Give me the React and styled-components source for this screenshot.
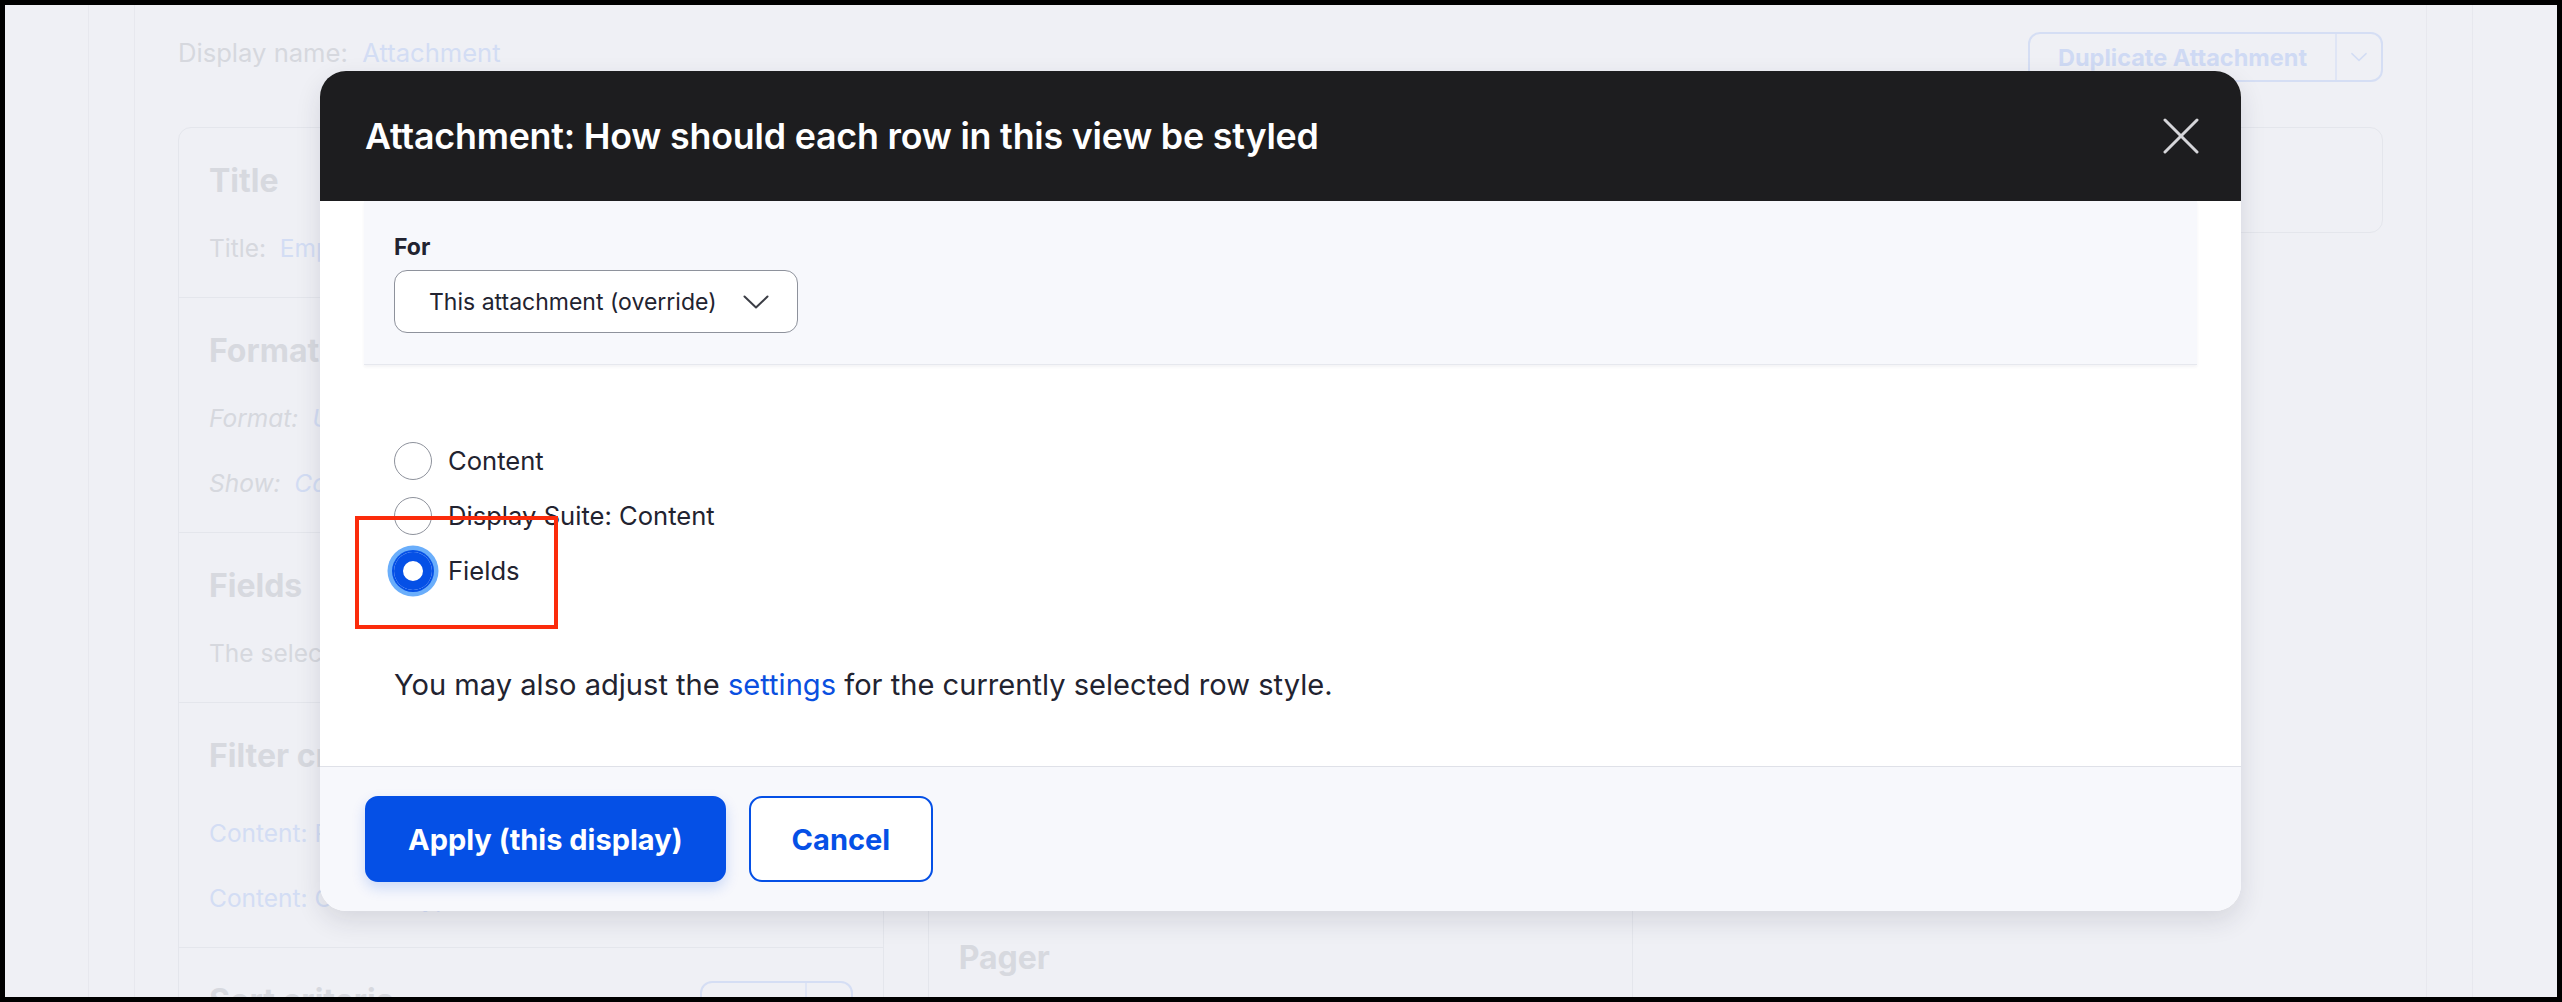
import React from 'react';
import styled, { createGlobalStyle } from 'styled-components';

const GlobalStyle = createGlobalStyle`
  html, body { margin: 0; padding: 0; }
  body { background: #000; font-family: Inter, "Noto Sans", "Liberation Sans", sans-serif; }
  *, *::before, *::after { box-sizing: border-box; }
`;

const Frame = styled.div`
  width: 2562px;
  height: 1002px;
  padding: 5px;
  background: #000;
`;

const Viewport = styled.div`
  position: relative;
  height: 100%;
  background: #eff0f5;
  overflow: hidden;
`;

const Shell = styled.div`
  margin-left: 83px;
  width: 2385px;
  height: 100%;
  border-left: 1px solid #e7e8ee;
  border-right: 1px solid #e7e8ee;
`;

const Inner = styled.div`
  margin: 0 45px;
  height: 100%;
  border-left: 1px solid #e7e8ee;
  border-right: 1px solid #e7e8ee;
  padding: 0 43px;
`;

const TopBar = styled.div`
  display: flex;
  justify-content: space-between;
  align-items: center;
  padding-top: 27px;
`;

const DisplayName = styled.div`
  font-size: 25.6px;
  color: #d6d8de;
  padding-bottom: 10px;
`;

const FadedLink = styled.span`
  color: #d3ddf4;
`;

const SplitButton = styled.div`
  display: flex;
  align-items: stretch;
  height: 50px;
  border: 2px solid #d5def4;
  border-radius: 12px;
  color: #cfdaf4;
  font-size: 23.5px;
  font-weight: 700;
`;

const SplitMain = styled.div`
  display: flex;
  align-items: center;
  padding: 0 ${p => p.$pad}px;
`;

const SplitToggle = styled.div`
  display: flex;
  align-items: center;
  justify-content: center;
  width: 46px;
  border-left: 2px solid #dfe5f5;
`;

const Columns = styled.div`
  display: grid;
  grid-template-columns: repeat(3, 1fr);
  gap: 44px;
  margin-top: 45px;
  align-items: start;
`;

const Card = styled.div`
  border: 1px solid #e4e6ec;
  border-radius: 13px;
`;

const Section = styled.div`
  padding: 33px 30px ${p => p.$pb || 31}px;
  & + & {
    border-top: 1px solid #e4e6ec;
  }
`;

const HeadRow = styled.div`
  display: flex;
  justify-content: space-between;
  align-items: flex-start;
`;

const Heading = styled.h3`
  margin: 0;
  font-size: 32px;
  line-height: 40px;
  font-weight: 700;
  color: #d7d9df;
`;

const Lines = styled.div`
  display: flex;
  flex-direction: column;
  gap: 29px;
  margin-top: 29px;
`;

const Line = styled.div`
  font-size: 24.5px;
  line-height: 36px;
  color: #d6d8de;
  font-style: ${p => (p.$italic ? 'italic' : 'normal')};
  white-space: nowrap;
`;

/* Dialog */

const Dialog = styled.div`
  position: absolute;
  left: 315px;
  top: 66px;
  width: 1921px;
  background: #fff;
  border-radius: 26px;
  overflow: hidden;
  box-shadow: 0 10px 26px rgba(30, 36, 60, 0.12);
`;

const DialogHeader = styled.div`
  height: 130px;
  background: #1d1d1f;
  display: flex;
  align-items: center;
  justify-content: space-between;
  padding: 0 42px 0 45px;
`;

const DialogTitle = styled.h2`
  margin: 0;
  font-size: 35.8px;
  font-weight: 600;
  color: #fff;
  letter-spacing: -0.2px;
`;

const CloseButton = styled.button`
  border: 0;
  padding: 0;
  background: none;
  width: 36px;
  height: 36px;
  display: flex;
  cursor: pointer;
`;

const DialogBody = styled.div`
  padding: 0 44px;
`;

const OverrideBand = styled.div`
  background: #f7f8fc;
  padding: 31px 30px 31px;
  border-bottom: 1px solid #e6e8ee;
  box-shadow: 0 2px 3px rgba(20, 25, 50, 0.05);
`;

const FieldLabel = styled.label`
  display: block;
  font-size: 23px;
  line-height: 30px;
  font-weight: 700;
  color: #222330;
  margin-bottom: 8px;
`;

const Select = styled.div`
  display: inline-flex;
  align-items: center;
  gap: 26px;
  height: 63px;
  padding: 0 28px 0 34px;
  border: 1px solid #8e929c;
  border-radius: 13px;
  background: #fff;
  font-size: 23px;
  color: #222330;
`;

const Form = styled.div`
  padding: 77px 30px 62px;
`;

const RadioList = styled.div`
  display: flex;
  flex-direction: column;
  gap: 17px;
`;

const RadioRow = styled.label`
  display: flex;
  align-items: center;
  gap: 16px;
  font-size: 25.6px;
  line-height: 38px;
  color: #222330;
`;

const RadioCircle = styled.span`
  flex: none;
  width: 38px;
  height: 38px;
  border-radius: 50%;
  background: #fff;
  border: ${p => (p.$checked ? '0' : '1.5px solid #8e929c')};
  box-shadow: ${p =>
    p.$checked
      ? 'inset 0 0 0 9px #0550e6, 0 0 0 2px #0550e6, 0 0 0 6.5px #6aaefb'
      : 'none'};
`;

const HelpText = styled.p`
  margin: 76px 0 0;
  font-size: 29.1px;
  line-height: 38px;
  color: #222330;
`;

const InlineLink = styled.a`
  color: #0a4fe0;
  text-decoration: none;
`;

const DialogFooter = styled.div`
  display: flex;
  gap: 23px;
  padding: 29px 45px;
  background: #f7f8fc;
  border-top: 1px solid #dfe1e8;
`;

const Button = styled.button`
  height: 86px;
  padding: 0 41px;
  border-radius: 13px;
  border: 2px solid #0550e6;
  font-family: inherit;
  font-size: 29px;
  font-weight: 700;
  cursor: pointer;
  background: ${p => (p.$primary ? '#0550e6' : '#fff')};
  color: ${p => (p.$primary ? '#fff' : '#0550e6')};
  box-shadow: ${p => (p.$primary ? '0 6px 14px rgba(5, 80, 230, 0.18)' : 'none')};
`;

const Annotation = styled.div`
  position: absolute;
  left: 35px;
  top: 445px;
  width: 203px;
  height: 113px;
  border: 4px solid #fb2b0b;
  pointer-events: none;
`;

const Chevron = ({ color = '#3b3d45', w = 26, h = 14, sw = 2 }) => (
  <svg width={w} height={h} viewBox="0 0 26 14" fill="none">
    <polyline points="1.5,1.5 13,12.5 24.5,1.5" stroke={color} strokeWidth={sw} strokeLinecap="round" strokeLinejoin="round" />
  </svg>
);

const CloseIcon = () => (
  <svg width="36" height="36" viewBox="0 0 36 36" fill="none">
    <line x1="2" y1="2" x2="34" y2="34" stroke="#d6d6da" strokeWidth="3" strokeLinecap="round" />
    <line x1="34" y1="2" x2="2" y2="34" stroke="#d6d6da" strokeWidth="3" strokeLinecap="round" />
  </svg>
);

const radios = [
  { label: 'Content', checked: false },
  { label: 'Display Suite: Content', checked: false },
  { label: 'Fields', checked: true },
];

export default function App() {
  return (
    <>
      <GlobalStyle />
      <Frame>
        <Viewport>
          <Shell>
            <Inner>
              <TopBar>
                <DisplayName>
                  Display name:&nbsp; <FadedLink>Attachment</FadedLink>
                </DisplayName>
                <SplitButton>
                  <SplitMain $pad={28}>Duplicate Attachment</SplitMain>
                  <SplitToggle>
                    <Chevron color="#d3ddf4" w={16} h={10} sw={2.4} />
                  </SplitToggle>
                </SplitButton>
              </TopBar>

              <Columns>
                <Card>
                  <Section>
                    <Heading>Title</Heading>
                    <Lines>
                      <Line>Title:&nbsp; <FadedLink>Empty</FadedLink></Line>
                    </Lines>
                  </Section>
                  <Section>
                    <Heading>Format</Heading>
                    <Lines>
                      <Line $italic>Format:&nbsp; <FadedLink>Unformatted list</FadedLink> | <FadedLink>Settings</FadedLink></Line>
                      <Line $italic>Show:&nbsp; <FadedLink>Content</FadedLink> | <FadedLink>Settings</FadedLink></Line>
                    </Lines>
                  </Section>
                  <Section>
                    <Heading>Fields</Heading>
                    <Lines>
                      <Line>The selected style or row format does not use fields.</Line>
                    </Lines>
                  </Section>
                  <Section>
                    <HeadRow>
                      <Heading>Filter criteria</Heading>
                      <SplitButton>
                        <SplitMain $pad={28}>Add</SplitMain>
                        <SplitToggle>
                          <Chevron color="#d3ddf4" w={16} h={10} sw={2.4} />
                        </SplitToggle>
                      </SplitButton>
                    </HeadRow>
                    <Lines>
                      <Line><FadedLink>Content: Published (= Yes)</FadedLink></Line>
                      <Line><FadedLink>Content: Content type (= Article)</FadedLink></Line>
                    </Lines>
                  </Section>
                  <Section>
                    <HeadRow>
                      <Heading>Sort criteria</Heading>
                      <SplitButton>
                        <SplitMain $pad={28}>Add</SplitMain>
                        <SplitToggle>
                          <Chevron color="#d3ddf4" w={16} h={10} sw={2.4} />
                        </SplitToggle>
                      </SplitButton>
                    </HeadRow>
                  </Section>
                </Card>

                <Card>
                  <Section>
                    <Heading>Attachment settings</Heading>
                    <Lines>
                      <Line>Attach to: <FadedLink>Not defined</FadedLink></Line>
                      <Line>Attachment position: <FadedLink>Before</FadedLink></Line>
                      <Line>Inherit contextual filters: <FadedLink>Yes</FadedLink></Line>
                      <Line>Inherit exposed filters: <FadedLink>No</FadedLink></Line>
                      <Line>Inherit pager: <FadedLink>No</FadedLink></Line>
                      <Line>Render pager: <FadedLink>No</FadedLink></Line>
                    </Lines>
                  </Section>
                  <Section>
                    <Heading>Header</Heading>
                    <Lines>
                      <Line>No header</Line>
                    </Lines>
                  </Section>
                  <Section $pb={38}>
                    <Heading>Footer</Heading>
                  </Section>
                  <Section>
                    <Heading>Pager</Heading>
                    <Lines>
                      <Line>Items to display: <FadedLink>10 items</FadedLink></Line>
                    </Lines>
                  </Section>
                </Card>

                <Card>
                  <Section>
                    <Heading>Advanced</Heading>
                  </Section>
                </Card>
              </Columns>
            </Inner>
          </Shell>

          <Dialog role="dialog">
            <DialogHeader>
              <DialogTitle>Attachment: How should each row in this view be styled</DialogTitle>
              <CloseButton aria-label="Close">
                <CloseIcon />
              </CloseButton>
            </DialogHeader>
            <DialogBody>
              <OverrideBand>
                <FieldLabel>For</FieldLabel>
                <Select>
                  This attachment (override)
                  <Chevron />
                </Select>
              </OverrideBand>
              <Form>
                <RadioList>
                  {radios.map(r => (
                    <RadioRow key={r.label}>
                      <RadioCircle $checked={r.checked} />
                      {r.label}
                    </RadioRow>
                  ))}
                </RadioList>
                <HelpText>
                  You may also adjust the <InlineLink href="#">settings</InlineLink> for the currently selected row style.
                </HelpText>
              </Form>
            </DialogBody>
            <DialogFooter>
              <Button $primary>Apply (this display)</Button>
              <Button>Cancel</Button>
            </DialogFooter>
            <Annotation />
          </Dialog>
        </Viewport>
      </Frame>
    </>
  );
}
